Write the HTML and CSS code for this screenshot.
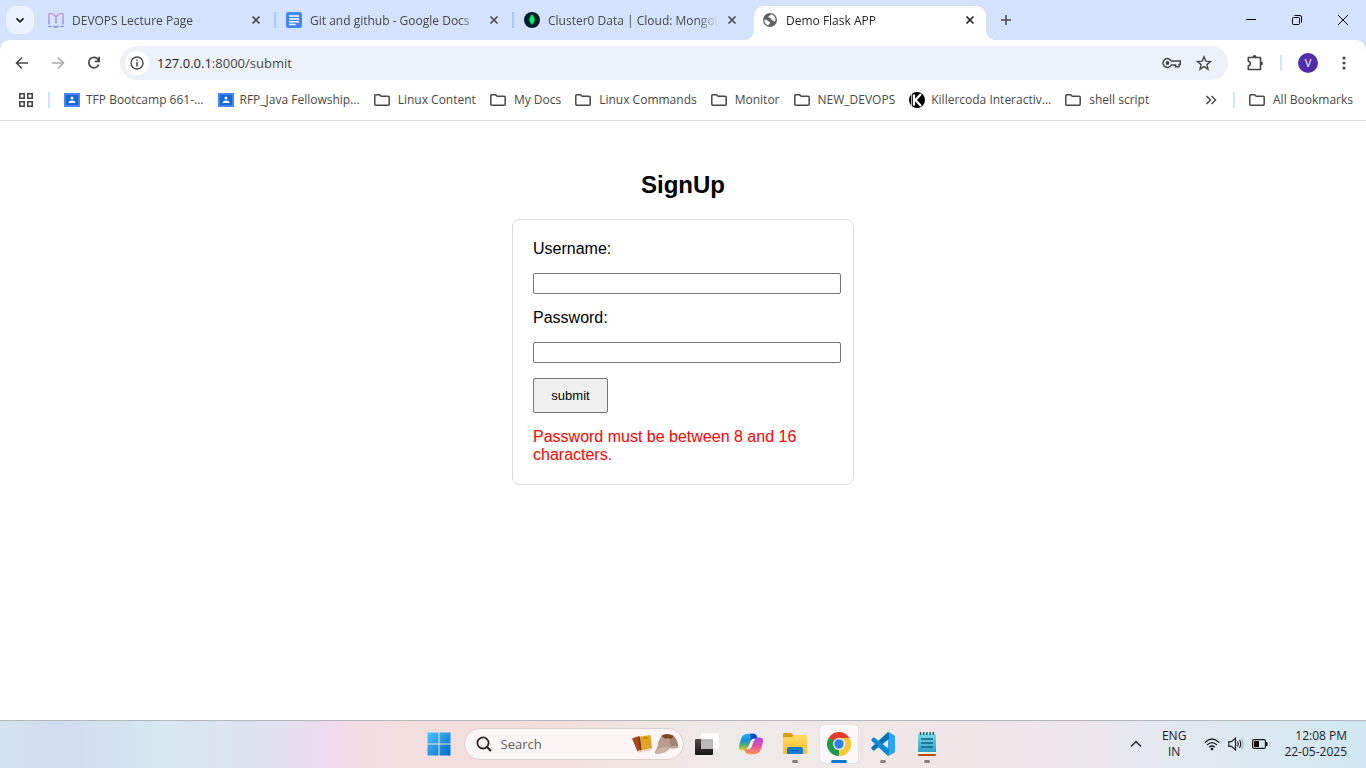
FILE: index.html
```html
<!DOCTYPE html>
<html lang="en">
<head>
<meta charset="utf-8">
<title>Demo Flask APP</title>
<link rel="stylesheet" href="styles.css">
</head>
<body>
<svg class="defs" aria-hidden="true">
  <symbol id="folder" viewBox="0 0 16 16"><path d="M.8 3.500q0-.8.8-.8h4l1.600 1.600h7q1 0 1 1v7q0 1-1 1H1.800q-1 0-1-1z" fill="none" stroke="#474747" stroke-width="1.500"/></symbol>
  <symbol id="close" viewBox="0 0 12 12"><path d="M2.500 2.500l7 7m0-7l-7 7" fill="none" stroke="currentColor" stroke-width="1.600"/></symbol>
  <symbol id="classroom" viewBox="0 0 16 16"><path d="M0 1h16v14H0z" fill="#4285f4"/><path d="M2 3h12v10H2z" fill="#1967d2"/><circle cx="8" cy="6" r="1.500" fill="#fff"/><path d="M4.500 11q0-2.500 3.500-2.500t3.500 2.500z" fill="#fff"/></symbol>
</svg>
<div class="screen">
  <header class="browser">
    <div class="strip">
      <button class="tabsearch" aria-label="Search tabs"><svg width="12" height="12" viewBox="0 0 12 12"><path d="M2.500 4.300L6 7.800l3.500-3.500" fill="none" stroke="#1f1f1f" stroke-width="1.800"/></svg></button>
      <div class="tabs">
        <div class="tab">
          <svg width="16" height="16" viewBox="0 0 16 16"><defs><linearGradient id="book" x2="0" y2="1"><stop stop-color="#c58ad8"/><stop offset="1" stop-color="#6f74d8"/></linearGradient></defs><path d="M1 12.500V1.500h2.500L8 4.500l4.500-3H15v11M8 4.500v7M.5 14.500h3M5.500 14L8 15.300l2.500-1.300M12.500 14.500h3" fill="none" stroke="url(#book)" stroke-width="1.200"/></svg>
          <span class="title">DEVOPS Lecture Page</span>
          <button class="x" aria-label="Close tab"><svg width="12" height="12"><use href="#close"/></svg></button>
        </div>
        <span class="sep"></span>
        <div class="tab">
          <svg width="16" height="16" viewBox="0 0 16 16"><rect width="16" height="16" rx="2" fill="#4285f4"/><path d="M3 4h10M3 7h10M3 9.800h10M3 12.500h6.500" stroke="#fff" stroke-width="1.500"/></svg>
          <span class="title">Git and github - Google Docs</span>
          <button class="x" aria-label="Close tab"><svg width="12" height="12"><use href="#close"/></svg></button>
        </div>
        <span class="sep"></span>
        <div class="tab">
          <svg width="16" height="16" viewBox="0 0 16 16"><circle cx="8" cy="8" r="8" fill="#001e2b"/><path d="M8 2.200c4 4 3 7.800.4 9.800L8 13.800 7.600 12C5 10 4 6.200 8 2.200z" fill="#00ed64"/></svg>
          <span class="title">Cluster0 Data | Cloud: MongoDB</span>
          <button class="x" aria-label="Close tab"><svg width="12" height="12"><use href="#close"/></svg></button>
        </div>
        <span class="sep none"></span>
        <div class="tab active">
          <svg width="16" height="16" viewBox="0 0 16 16"><circle cx="8" cy="8" r="7" fill="#5f6368"/><path d="M2.300 7.800C4 7.500 5 8 6 9s2 .3 2 1.500-1.500 1-1.300 2.800C4 13 2.300 10.500 2.300 7.800zM9 2.500c0 1-2.500 1-2.500 2.500S9 5.500 9 7s2 1 2.500 2 1.800.2 2 0C14 5.500 12 3 9 2.500z" fill="#fff"/></svg>
          <span class="title">Demo Flask APP</span>
          <button class="x" aria-label="Close tab"><svg width="12" height="12"><use href="#close"/></svg></button>
        </div>
      </div>
      <button class="newtab" aria-label="New tab"><svg width="12" height="12" viewBox="0 0 12 12"><path d="M6 1v10M1 6h10" stroke="#474747" stroke-width="1.500"/></svg></button>
      <div class="window">
        <button aria-label="Minimize"><svg width="12" height="12" viewBox="0 0 12 12"><path d="M1 5.500h10" stroke="#000"/></svg></button>
        <button aria-label="Restore"><svg width="12" height="12" viewBox="0 0 12 12"><rect x="1.500" y="3.500" width="7" height="7" rx="1" fill="none" stroke="#000"/><path d="M3.500 1.500H9q1.500 0 1.500 1.500v5.500" fill="none" stroke="#000"/></svg></button>
        <button aria-label="Close"><svg width="12" height="12" viewBox="0 0 12 12"><path d="M1 1l10 10M11 1L1 11" stroke="#000"/></svg></button>
      </div>
    </div>
    <div class="toolbar">
      <button aria-label="Back"><svg width="16" height="16" viewBox="0 0 16 16"><path d="M14 8H3M8 2.500L2.500 8 8 13.500" fill="none" stroke="#474747" stroke-width="1.600"/></svg></button>
      <button aria-label="Forward"><svg width="16" height="16" viewBox="0 0 16 16"><path d="M2 8h11M8 2.500L13.500 8 8 13.500" fill="none" stroke="#ababab" stroke-width="1.600"/></svg></button>
      <button aria-label="Reload"><svg width="16" height="16" viewBox="0 0 16 16"><path d="M12.800 9.500A5.200 5.200 0 1 1 12.500 5M13.200 1.800V6.300H8.700" fill="none" stroke="#474747" stroke-width="1.700"/></svg></button>
      <div class="omnibox">
        <button class="info" aria-label="Site information"><svg width="14" height="14" viewBox="0 0 14 14"><circle cx="7" cy="7" r="6" fill="none" stroke="#474747" stroke-width="1.400"/><path d="M7 6v4.500M7 3.500V5" stroke="#474747" stroke-width="1.500"/></svg></button>
        <div class="url"><span class="host">127.0.0.1</span>:8000/submit</div>
        <button aria-label="Passwords"><svg width="20" height="16" viewBox="0 0 20 16"><path d="M9.300 6H18.300V9.500H17v2.200h-3.400V10H9.300A4.400 4.400 0 1 1 9.300 6z" fill="none" stroke="#474747" stroke-width="1.500"/><circle cx="5.500" cy="8" r="1.900" fill="#474747"/></svg></button>
        <button aria-label="Bookmark"><svg width="16" height="16" viewBox="0 0 16 16"><path d="M8 1.800l1.800 4.300 4.700.4-3.600 3.100 1.100 4.600L8 11.700l-4 2.500 1.100-4.600L1.500 6.500l4.700-.4z" fill="none" stroke="#474747" stroke-width="1.400"/></svg></button>
      </div>
      <button class="ext" aria-label="Extensions"><svg width="18" height="18" viewBox="0 0 18 18"><path d="M2.300 3.500h12.200v12H2.300v-3.700c2.600-.3 2.600-4.200 0-4.500z" fill="none" stroke="#474747" stroke-width="1.600" stroke-linejoin="round"/><path d="M6.500 3a2 2 0 0 1 4 0zM15 7.500a2 2 0 0 1 0 4z" fill="#474747"/></svg></button>
      <span class="bar"></span>
      <button class="avatar">V</button>
      <button class="more" aria-label="Menu"><svg width="4" height="16" viewBox="0 0 4 16"><g fill="#474747"><circle cx="2" cy="3" r="1.600"/><circle cx="2" cy="8" r="1.600"/><circle cx="2" cy="13" r="1.600"/></g></svg></button>
    </div>
    <nav class="bookmarks">
      <button class="apps" aria-label="Tab groups"><svg width="16" height="16" viewBox="0 0 16 16"><path d="M1.800 1.800h4.400v4.400H1.800zM9.800 1.800h4.400v4.400H9.800zM1.800 9.800h4.400v4.400H1.800zM9.800 9.800h4.400v4.400H9.800z" fill="none" stroke="#474747" stroke-width="1.600"/></svg></button>
      <span class="bar"></span>
      <div class="marks">
        <a href="#"><svg width="16" height="16"><use href="#classroom"/></svg>TFP Bootcamp 661-...</a>
        <a href="#"><svg width="16" height="16"><use href="#classroom"/></svg>RFP_Java Fellowship...</a>
        <a href="#" class="dir"><svg width="16" height="16"><use href="#folder"/></svg>Linux Content</a>
        <a href="#" class="dir"><svg width="16" height="16"><use href="#folder"/></svg>My Docs</a>
        <a href="#" class="dir"><svg width="16" height="16"><use href="#folder"/></svg>Linux Commands</a>
        <a href="#" class="dir"><svg width="16" height="16"><use href="#folder"/></svg>Monitor</a>
        <a href="#" class="dir"><svg width="16" height="16"><use href="#folder"/></svg>NEW_DEVOPS</a>
        <a href="#"><svg width="16" height="16" viewBox="0 0 16 16"><circle cx="8" cy="8" r="8" fill="#000"/><path d="M5 2.500v11M12 2L6.500 8l5.500 6" fill="none" stroke="#fff" stroke-width="2.200"/><path d="M2.600 0v16" stroke="#fff" stroke-width=".8"/></svg>Killercoda Interactiv...</a>
        <a href="#" class="dir"><svg width="16" height="16"><use href="#folder"/></svg>shell script</a>
      </div>
      <button class="overflow" aria-label="More bookmarks"><svg width="12" height="12" viewBox="0 0 12 12"><path d="M1.500 2l4 4-4 4M6.500 2l4 4-4 4" fill="none" stroke="#474747" stroke-width="1.500"/></svg></button>
      <span class="bar"></span>
      <a href="#" class="dir all"><svg width="16" height="16"><use href="#folder"/></svg>All Bookmarks</a>
    </nav>
  </header>

  <main class="page">
    <h2>SignUp</h2>
    <form class="card">
      <label for="username">Username:</label>
      <input type="text" id="username">
      <label for="password">Password:</label>
      <input type="password" id="password">
      <button type="button">submit</button>
      <p class="error">Password must be between 8 and 16 characters.</p>
    </form>
  </main>

  <footer class="taskbar">
    <div class="side"></div>
    <div class="dock">
      <button class="start" aria-label="Start"><svg width="24" height="24" viewBox="0 0 24 24"><defs><linearGradient id="win" gradientUnits="userSpaceOnUse" x1="0" y1="0" x2="24" y2="24"><stop stop-color="#4cc8fa"/><stop offset="1" stop-color="#0067c9"/></linearGradient></defs><path d="M.5.500h11v11H.5zM12.500.500h11v11h-11zM.5 12.500h11v11H.5zM12.500 12.500h11v11h-11z" fill="url(#win)"/></svg></button>
      <div class="search">
        <svg width="16" height="16" viewBox="0 0 16 16"><circle cx="7" cy="7" r="5.600" fill="none" stroke="#222" stroke-width="1.700"/><path d="M11 11l4 4" stroke="#222" stroke-width="2"/></svg>
        <input type="text" placeholder="Search" aria-label="Search">
        <svg class="art" width="48" height="24" viewBox="0 0 48 24"><path d="M1 6.500L8 4l3 14-4.500 1.500z" fill="#a8481a"/><path d="M6.500 19.500L10 17l11-1-.5 2-12 2.500z" fill="#ead3c4"/><path d="M9 4.500L19.500 3 21 16l-10.500 2z" fill="#e0a526"/><path d="M7.500 5L9 4.500 10.500 18 9 18.500z" fill="#7b3715"/><path d="M12 6.500l5-.7" stroke="#b97a15"/><path d="M27 14Q27 6 33 3.500q7-3 12 3 1.500 3 2.500 8-5 1.500-9 0-3 5-11 0z" fill="#a08576"/><path d="M27 13Q28 4 35 3q5 2 4 12-2 5-8 6-8 2-7-1 2-4 3-7z" fill="#b99c8c"/><path d="M24 20q3-5 14-5-2 5-7 6-7 2-7-1z" fill="#cdb3a5"/><path d="M30 4q5-4 13 0l-3 3-3-1-2 1z" fill="#80441d"/><path d="M38 15q5-2 10-.5l-.5 1q-5 2-9.500.5z" fill="#c0a596"/></svg>
      </div>
      <button class="app" aria-label="Task view"><svg width="24" height="24" viewBox="0 0 24 24"><defs><linearGradient id="tv" x2="0" y2="1"><stop stop-color="#4a4a4a"/><stop offset="1" stop-color="#151515"/></linearGradient></defs><rect y="7" width="18" height="16" rx="1" fill="url(#tv)"/><rect x="6" y="1" width="18" height="16" rx="1" fill="#fff" opacity=".85"/><path d="M6 7h12v10H6z" fill="#b9b9b9"/></svg></button>
      <button class="app" aria-label="Copilot"><svg width="24" height="24" viewBox="0 0 26 24"><defs><linearGradient id="cp1" x2="0" y2="1"><stop stop-color="#18b5f5"/><stop offset=".45" stop-color="#1f8fd0"/><stop offset=".75" stop-color="#6dbb5a"/><stop offset="1" stop-color="#f3cf1c"/></linearGradient><linearGradient id="cp2" x2="0" y2="1"><stop stop-color="#a34de8"/><stop offset=".5" stop-color="#e34fa0"/><stop offset="1" stop-color="#ff9a55"/></linearGradient></defs><path d="M9 1h7q3 0 4 5h-3q-4 0-5 4l-2 5q-1 4-5 4H4q-5 0-4-5l2-7q2-6 7-6z" fill="url(#cp1)"/><path d="M12 1h4q3 0 4 5h-3q-3 0-4 2z" fill="#1547c4"/><path d="M17 23h-7q-3 0-4-5h3q4 0 5-4l2-5q1-4 5-4h1q5 0 4 5l-2 7q-2 6-7 6z" fill="url(#cp2)"/><path d="M14 7.500h3.500q-2 1-2.500 3l-1.500 4.500q-.5 1.500-2 1.500H9q2-1 2.500-3z" fill="#f6eef0"/></svg></button>
      <button class="app run" aria-label="File Explorer"><svg width="24" height="24" viewBox="0 0 24 24"><defs><linearGradient id="fe" x2="0" y2="1"><stop stop-color="#ffda64"/><stop offset="1" stop-color="#f8bd2a"/></linearGradient></defs><path d="M0 2q0-1 1-1h7l3 3v4H0z" fill="#d99a0b"/><path d="M0 6q0-1 1-1h8l2-2h12q1 0 1 1v17q0 1-1 1H1q-1 0-1-1z" fill="url(#fe)"/><path d="M4 22v-5q0-2 2-2h12q2 0 2 2v5z" fill="#117bd0"/><path d="M8 18.500h8" stroke="#075a9f"/></svg></button>
      <button class="app run current" aria-label="Chrome"><svg width="24" height="24" viewBox="0 0 24 24"><path d="M12 12L1.600 6A12 12 0 0 1 22.400 6z" fill="#e33b2e"/><path d="M12 12L22.400 6A12 12 0 0 1 12 24z" fill="#fcc934"/><path d="M12 12v12A12 12 0 0 1 1.600 6z" fill="#229a4b"/><path d="M12 6h10.400A12 12 0 0 1 12 24l5.200-9z" fill="#fcc934"/><path d="M1.600 6l5.200 9L12 12z" fill="#229a4b"/><circle cx="12" cy="12" r="6" fill="#fff"/><circle cx="12" cy="12" r="4.800" fill="#307fe8"/></svg></button>
      <button class="app run" aria-label="Visual Studio Code"><svg width="24" height="24" viewBox="0 0 24 24"><path d="M17 0l6 3q1 .5 1 1.500v15q0 1-1 1.500l-6 3z" fill="#2ba5f1"/><path d="M17 0l1 1v6L3.500 18.200q-.8.500-1.500 0L.8 17q-1-1 0-2z" fill="#0072b8"/><path d="M17 24l1-1v-6L3.500 5.800q-.8-.5-1.500 0L.8 7q-1 1 0 2z" fill="#0a88d0"/></svg></button>
      <button class="app run" aria-label="Notepad"><svg width="20" height="24" viewBox="0 0 20 24"><defs><linearGradient id="np" x2="0" y2="1"><stop stop-color="#7adcec"/><stop offset="1" stop-color="#2d9fc4"/></linearGradient></defs><path d="M1 20h18v3q0 1-1 1H2q-1 0-1-1z" fill="#b4500b"/><path d="M1 19h18v3H1z" fill="#f4f4f4"/><path d="M1 3q0-1 1-1h16q1 0 1 1v17H1z" fill="url(#np)"/><path d="M3.500 0v3M6.700 0v3M9.900 0v3M13.100 0v3M16.300 0v3" stroke="#17586f" stroke-width="1.500"/><path d="M4 7h12M4 11h12M4 15h12" stroke="#11637f" stroke-width="1.700"/></svg></button>
    </div>
    <div class="side tray">
      <button class="up" aria-label="Hidden icons"><svg width="12" height="12" viewBox="0 0 12 12"><path d="M1 8.500l5-5 5 5" fill="none" stroke="#222" stroke-width="1.400"/></svg></button>
      <div class="lang">ENG<br>IN</div>
      <div class="status">
        <svg width="16" height="16" viewBox="0 0 16 16"><g fill="none" stroke="#1d1d1d" stroke-width="1.200"><path d="M.8 6.500q7.200-7 14.400 0M3 9q5-4.800 10 0M5.200 11.300q2.800-2.600 5.600 0"/></g><circle cx="8" cy="13" r="1.300"/></svg>
        <svg width="16" height="16" viewBox="0 0 16 16"><g fill="none" stroke="#1d1d1d" stroke-width="1.200"><path d="M.8 5.700h2.700L7.500 2v12L3.500 10.300H.8zM9.500 5.500q1.500 2.500 0 5M11.500 4q2.500 4 0 8"/><path d="M13.500 2.500q3.500 5.500 0 11" stroke="#aab4bd"/></g></svg>
        <svg width="16" height="16" viewBox="0 0 16 16"><rect x=".6" y="3.600" width="12.800" height="8.800" rx="1.500" fill="none" stroke="#1d1d1d" stroke-width="1.200"/><path d="M2 5h5v6H2zM14 6h1.500v4H14z" fill="#111"/></svg>
      </div>
      <div class="clock">12:08 PM<br>22-05-2025</div>
    </div>
  </footer>
</div>
</body>
</html>
```
FILE: styles.css
```css
* { box-sizing: border-box; }
body { margin: 0; background: #fff; font-family: "Open Sans", "Noto Sans", sans-serif; font-size: 12px; line-height: 16px; color: #474747; }
.defs { position: absolute; width: 0; height: 0; }
svg { display: block; flex: none; }
header button, footer button { display: flex; align-items: center; justify-content: center; padding: 0; border: 0; background: none; color: inherit; font: inherit; }
a { color: inherit; text-decoration: none; }
.screen { display: flex; flex-direction: column; min-height: 100vh; }

.browser { background: #d3e3fd; }
.strip { display: flex; align-items: flex-start; height: 40px; padding: 6px 0 0 6px; }
.strip .tabsearch { width: 28px; height: 28px; border-radius: 10px; background: #ecf3fe; margin-right: 6px; }
.tabs { display: flex; flex: 0 1 946px; min-width: 0; height: 34px; }
.tab { display: flex; align-items: center; flex: 1 1 0; min-width: 0; height: 34px; padding: 0 10px 6px 8px; gap: 8px; }
.title { flex: 1; min-width: 0; padding-top: 2px; overflow: hidden; white-space: nowrap; -webkit-mask-image: linear-gradient(to right, #000 calc(100% - 20px), transparent); }
.tab .x { width: 12px; height: 12px; }
.sep { flex: none; width: 2px; height: 16px; margin: 6px 2px; background: #a8c7fa; }
.sep.none { background: none; }
.tab.active { position: relative; background: #fff; border-radius: 10px 10px 0 0; color: #1f1f1f; }
.tab.active::before, .tab.active::after { content: ""; position: absolute; bottom: 0; width: 10px; height: 10px; }
.tab.active::before { left: -10px; background: radial-gradient(circle at 0 0, transparent 10px, #fff 10px); }
.tab.active::after { right: -10px; background: radial-gradient(circle at 100% 0, transparent 10px, #fff 10px); }
.strip .newtab { width: 28px; height: 28px; margin-left: 6px; }
.window { display: flex; margin-left: auto; }
.window button { width: 46px; height: 28px; }

.toolbar { display: flex; align-items: center; height: 46px; padding: 0 12px 0 8px; background: #fff; border-radius: 10px 10px 0 0; }
.toolbar > button { width: 28px; height: 28px; margin-right: 8px; }
.omnibox { display: flex; align-items: center; flex: 1; min-width: 0; height: 34px; margin: 0 13px 0 4px; padding: 0 16px 0 5px; border-radius: 17px; background: #ecf0f9; }
.omnibox .info { width: 24px; height: 24px; border-radius: 12px; background: #fff; margin-right: 8px; }
.url { flex: 1; font-size: 13px; line-height: 18px; color: #474747; }
.host { color: #1f1f1f; }
.omnibox > button + button { margin-left: 14px; }
.bar { flex: none; width: 2px; height: 16px; background: #d3e3fd; }
.toolbar > .avatar { width: 20px; height: 20px; margin: 0 0 0 16px; border-radius: 10px; background: #512da8; color: #fff; font-size: 11px; }
.toolbar > .more { width: 4px; margin: 0 8px 0 24px; }
.toolbar > .ext { margin: 0 11px 0 0; }

.bookmarks { display: flex; align-items: center; height: 35px; padding: 0 13px 7px 18px; background: #fff; border-bottom: 1px solid #dedede; white-space: nowrap; }
.apps { margin-right: 14px; }
.bookmarks a { display: flex; align-items: center; gap: 6px; }
.bookmarks .dir { gap: 8px; }
.marks { display: flex; flex: 1; min-width: 0; gap: 14px; margin-left: 14px; overflow: hidden; }
.overflow { margin: 0 16px; }
.all { margin-left: 14px; }

.page { flex: 1; display: flex; flex-direction: column; align-items: center; padding: 50px 20px 20px; font-family: "Liberation Sans", Arial, sans-serif; font-size: 16px; line-height: 18px; color: #000; }
.page h2 { margin: 0 0 20px; font-size: 24px; line-height: 28px; }
.card { display: flex; flex-direction: column; align-items: flex-start; gap: 15px; width: 342px; padding: 20px; border: 1px solid #ddd; border-radius: 8px; }
.card input { width: 308px; height: 21px; padding: 1px 2px; border: 1px solid #767676; border-radius: 2px; background: #fff; font: inherit; font-size: 13px; }
.card button { min-width: 75px; height: 35px; padding: 0 16px; border: 1px solid #767676; border-radius: 2px; background: #efefef; color: #000; font: inherit; font-size: 13px; }
.error { margin: 0; color: #f00; }

.taskbar { display: flex; align-items: center; height: 48px; padding-bottom: 1px; border-top: 1px solid #b4b7bc; color: #1d1d1d; background: linear-gradient(to right, #d3e2ef 0, #d0dcef 4%, #d6e7f1 12%, #dbe4f1 16%, #e1dfef 21%, #f0daef 24%, #f2dbe3 26%, #f2dede 30%, #f3ded9 40%, #eeeae9 53%, #f0e6e6 66%, #efe5ea 76%, #e6e8ef 84%, #dbe8f1 92%, #cfe8f3 100%); }
.side { flex: 1; }
.dock { display: flex; align-items: center; height: 46px; margin-left: 28px; }
.start { margin-right: 13px; }
.search { display: flex; align-items: center; width: 220px; height: 32px; padding: 0 4px 0 11px; margin-right: 1px; border: 1px solid #dfcfcd; border-radius: 16px; background: #fbf5f5; }
.search input { flex: 1; min-width: 0; padding: 0 0 0 9px; border: 0; background: none; font: inherit; font-size: 13px; }
.search input::placeholder { color: #5e5b5b; opacity: 1; }
.app { position: relative; width: 38px; height: 38px; margin: 0 3px; border-radius: 4px; }
.current { background: #f9f7f7; box-shadow: 0 0 1px #bbb; }
.run::after { content: ""; position: absolute; bottom: 0; left: 50%; width: 6px; height: 3px; margin-left: -3px; border-radius: 2px; background: #85807f; }
.current::after { width: 16px; margin-left: -8px; background: #0078d4; }
.tray { display: flex; align-items: center; justify-content: flex-end; padding-right: 19px; text-align: center; }
.lang { margin: 0 18px 0 20px; }
.status { display: flex; gap: 8px; }
.clock { margin-left: 16px; text-align: right; }
```
